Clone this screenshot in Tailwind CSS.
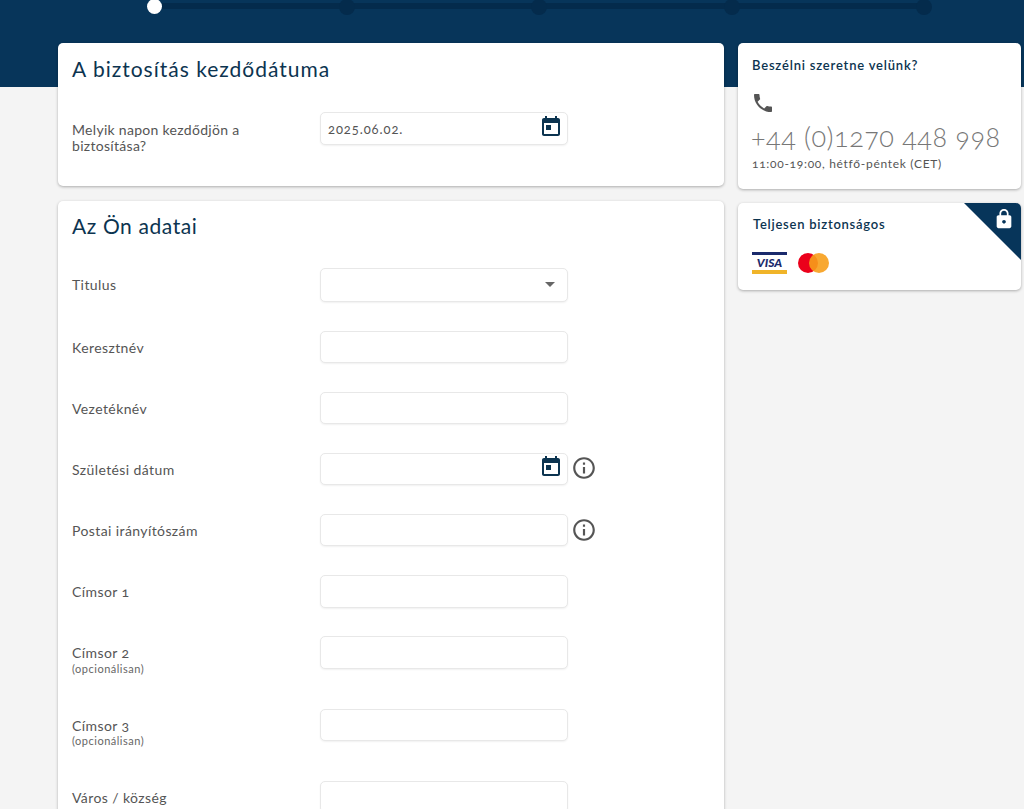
<!DOCTYPE html>
<html lang="hu">
<head>
  <meta charset="UTF-8">
  <meta name="viewport" content="width=device-width, initial-scale=1.0">
  <title>Biztosítás</title>
  <script src="https://cdn.jsdelivr.net/npm/@tailwindcss/browser@4"></script>
</head>
<body class="bg-[#f4f4f4] font-['Lato','Open_Sans',sans-serif] oldstyle-nums h-[809px] overflow-hidden">
  <!-- Header band with stepper -->
  <div class="bg-[#07355a] h-[87px] overflow-hidden">
    <div class="relative ml-[147px] w-[785px] h-[15px] flex items-start justify-between">
      <div class="absolute left-[8px] right-[8px] top-[3px] h-[6px] bg-[#042b4c]"></div>
      <div class="relative w-[15px] h-[15px] -mt-[1px] rounded-full bg-white"></div>
      <div class="relative w-[16px] h-[16px] -mt-[1px] rounded-full bg-[#042b4c]"></div>
      <div class="relative w-[16px] h-[16px] -mt-[1px] rounded-full bg-[#042b4c]"></div>
      <div class="relative w-[16px] h-[16px] -mt-[1px] rounded-full bg-[#042b4c]"></div>
      <div class="relative w-[16px] h-[16px] -mt-[1px] rounded-full bg-[#042b4c]"></div>
    </div>
  </div>

  <div class="flex items-start gap-[14px] pl-[58px] -mt-[44px]">
    <!-- Left column -->
    <div class="w-[666px] flex flex-col gap-[15px]">
      <div class="bg-white rounded-[5px] shadow-[0_1px_3px_rgba(0,0,0,0.3)] h-[143px] px-[14px]">
        <h2 class="pt-[12px] text-[21px] leading-[27px] text-[#0c3450] tracking-[1px]">A biztosítás kezdődátuma</h2>
        <div class="flex mt-[30px]">
          <div class="w-[248px] pt-[10px] pr-[60px] text-[14px] leading-[16px] text-[#555] tracking-[0.3px]">Melyik napon kezdődjön a biztosítása?</div>
          <div class="relative w-[248px] h-[33px] bg-white border border-[#e8e8e8] rounded-[5px] shadow-[0_1px_2px_rgba(0,0,0,0.06)] pl-[7px] text-[13px] leading-[32px] text-[#555] tracking-[0.9px]">
            2025.06.02.
            <svg class="absolute right-[4px] top-[2px] w-[24px] h-[24px] fill-[#0c3450]" viewBox="0 0 24 24"><path d="M19 3h-1V1h-2v2H8V1H6v2H5c-1.11 0-1.99.9-1.99 2L3 19c0 1.1.89 2 2 2h14c1.1 0 2-.9 2-2V5c0-1.1-.9-2-2-2zm0 16H5V8h14v11zM7 10h5v5H7z"/></svg>
          </div>
        </div>
      </div>

      <div class="bg-white rounded-[5px] shadow-[0_1px_3px_rgba(0,0,0,0.3)] h-[640px] px-[14px]">
        <h2 class="pt-[11px] text-[21px] leading-[27px] text-[#0c3450] tracking-[0.6px]">Az Ön adatai</h2>

        <div class="flex mt-[29px] h-[63px]">
          <div class="w-[248px] pt-[8px] text-[14px] leading-[17px] text-[#555] tracking-[0.4px]">Titulus</div>
          <div class="relative w-[248px] h-[34px] bg-white border border-[#e8e8e8] rounded-[5px] shadow-[0_1px_2px_rgba(0,0,0,0.06)]">
            <div class="absolute right-[12px] top-[13px] w-0 h-0 border-x-[5px] border-x-transparent border-t-[5px] border-t-[#666]"></div>
          </div>
        </div>

        <div class="flex h-[61px]">
          <div class="w-[248px] pt-[8px] text-[14px] leading-[17px] text-[#555] tracking-[0.4px]">Keresztnév</div>
          <div class="w-[248px] h-[32px] bg-white border border-[#e8e8e8] rounded-[5px] shadow-[0_1px_2px_rgba(0,0,0,0.06)]"></div>
        </div>

        <div class="flex h-[61px]">
          <div class="w-[248px] pt-[8px] text-[14px] leading-[17px] text-[#555] tracking-[0.4px]">Vezetéknév</div>
          <div class="w-[248px] h-[32px] bg-white border border-[#e8e8e8] rounded-[5px] shadow-[0_1px_2px_rgba(0,0,0,0.06)]"></div>
        </div>

        <div class="flex h-[61px]">
          <div class="w-[248px] pt-[8px] text-[14px] leading-[17px] text-[#555] tracking-[0.4px]">Születési dátum</div>
          <div class="relative w-[248px] h-[32px] bg-white border border-[#e8e8e8] rounded-[5px] shadow-[0_1px_2px_rgba(0,0,0,0.06)]">
            <svg class="absolute right-[4px] top-[1px] w-[24px] h-[24px] fill-[#0c3450]" viewBox="0 0 24 24"><path d="M19 3h-1V1h-2v2H8V1H6v2H5c-1.11 0-1.99.9-1.99 2L3 19c0 1.1.89 2 2 2h14c1.1 0 2-.9 2-2V5c0-1.1-.9-2-2-2zm0 16H5V8h14v11zM7 10h5v5H7z"/></svg>
          </div>
          <svg class="w-[26px] h-[26px] ml-[3px] mt-[2px] fill-[#555]" viewBox="0 0 24 24"><path d="M11 7h2v2h-2zm0 4h2v6h-2zm1-9C6.48 2 2 6.48 2 12s4.48 10 10 10 10-4.48 10-10S17.52 2 12 2zm0 18c-4.41 0-8-3.59-8-8s3.59-8 8-8 8 3.59 8 8-3.59 8-8 8z"/></svg>
        </div>

        <div class="flex h-[61px]">
          <div class="w-[248px] pt-[8px] text-[14px] leading-[17px] text-[#555] tracking-[0.4px]">Postai irányítószám</div>
          <div class="w-[248px] h-[32px] bg-white border border-[#e8e8e8] rounded-[5px] shadow-[0_1px_2px_rgba(0,0,0,0.06)]"></div>
          <svg class="w-[26px] h-[26px] ml-[3px] mt-[3px] fill-[#555]" viewBox="0 0 24 24"><path d="M11 7h2v2h-2zm0 4h2v6h-2zm1-9C6.48 2 2 6.48 2 12s4.48 10 10 10 10-4.48 10-10S17.52 2 12 2zm0 18c-4.41 0-8-3.59-8-8s3.59-8 8-8 8 3.59 8 8-3.59 8-8 8z"/></svg>
        </div>

        <div class="flex h-[61px]">
          <div class="w-[248px] pt-[8px] text-[14px] leading-[17px] text-[#555] tracking-[0.4px]">Címsor 1</div>
          <div class="w-[248px] h-[33px] bg-white border border-[#e8e8e8] rounded-[5px] shadow-[0_1px_2px_rgba(0,0,0,0.06)]"></div>
        </div>

        <div class="flex h-[73px]">
          <div class="w-[248px] pt-[8px] text-[14px] leading-[17px] text-[#555] tracking-[0.4px]">Címsor 2<div class="mt-[1px] text-[11px] leading-[13px] text-[#666] tracking-[0.5px]">(opcionálisan)</div></div>
          <div class="w-[248px] h-[33px] bg-white border border-[#e8e8e8] rounded-[5px] shadow-[0_1px_2px_rgba(0,0,0,0.06)]"></div>
        </div>

        <div class="flex h-[72px]">
          <div class="w-[248px] pt-[8px] text-[14px] leading-[17px] text-[#555] tracking-[0.4px]">Címsor 3<div class="text-[11px] leading-[13px] text-[#666] tracking-[0.5px]">(opcionálisan)</div></div>
          <div class="w-[248px] h-[32px] bg-white border border-[#e8e8e8] rounded-[5px] shadow-[0_1px_2px_rgba(0,0,0,0.06)]"></div>
        </div>

        <div class="flex h-[61px]">
          <div class="w-[248px] pt-[8px] text-[14px] leading-[17px] text-[#555] tracking-[0.4px]">Város / község</div>
          <div class="w-[248px] h-[32px] bg-white border border-[#e8e8e8] rounded-[5px] shadow-[0_1px_2px_rgba(0,0,0,0.06)]"></div>
        </div>
      </div>
    </div>

    <!-- Right column -->
    <div class="w-[283px] flex flex-col gap-[14px]">
      <div class="bg-white rounded-[5px] shadow-[0_1px_3px_rgba(0,0,0,0.3)] h-[146px] px-[14px] pt-[13px]">
        <div class="text-[13px] leading-[18px] font-semibold text-[#0c3450] tracking-[0.8px]">Beszélni szeretne velünk?</div>
        <svg class="w-[24px] h-[24px] mt-[17px] -ml-[1px] fill-[#555]" viewBox="0 0 24 24"><path d="M6.62 10.79c1.44 2.83 3.76 5.14 6.59 6.59l2.2-2.2c.27-.27.67-.36 1.02-.24 1.12.37 2.33.57 3.57.57.55 0 1 .45 1 1V20c0 .55-.45 1-1 1-9.39 0-17-7.61-17-17 0-.55.45-1 1-1h3.5c.55 0 1 .45 1 1 0 1.25.2 2.45.57 3.57.11.35.03.74-.25 1.02l-2.2 2.2z"/></svg>
        <div class="mt-[7px] -ml-[1px] text-[27px] leading-[30px] font-light text-[#777] tracking-[0.5px] whitespace-nowrap">+44 (0)1270 448 998</div>
        <div class="mt-[4px] text-[12px] leading-[16px] text-[#555] tracking-[0.7px] whitespace-nowrap">11:00-19:00, hétfő-péntek (CET)</div>
      </div>

      <div class="relative overflow-hidden bg-white rounded-[5px] shadow-[0_1px_3px_rgba(0,0,0,0.3)] h-[87px] pl-[15px] pt-[12px]">
        <svg class="absolute right-0 top-0 w-[57px] h-[57px] fill-[#07355a]" viewBox="0 0 57 57"><polygon points="0,0 57,0 57,57"/></svg>
        <svg class="absolute right-[6px] top-[5px] w-[22px] h-[22px] fill-white" viewBox="0 0 24 24"><path d="M18 8h-1V6c0-2.76-2.24-5-5-5S7 3.24 7 6v2H6c-1.1 0-2 .9-2 2v10c0 1.1.9 2 2 2h12c1.1 0 2-.9 2-2V10c0-1.1-.9-2-2-2zm-6 9c-1.1 0-2-.9-2-2s.9-2 2-2 2 .9 2 2-.9 2-2 2zm3.1-9H8.9V6c0-1.71 1.39-3.1 3.1-3.1 1.71 0 3.1 1.39 3.1 3.1v2z"/></svg>
        <div class="text-[13px] leading-[18px] font-semibold text-[#0c3450] tracking-[0.75px]">Teljesen biztonságos</div>
        <div class="flex items-center gap-[11px] -ml-[1px] mt-[19px]">
          <div class="w-[35px] h-[22px] flex flex-col justify-between">
            <div class="h-[3px] bg-[#1a2a6c]"></div>
            <div class="text-[12px] leading-[12px] font-black italic text-[#1a2a6c] text-center">VISA</div>
            <div class="h-[4px] bg-[#f0b429]"></div>
          </div>
          <div class="flex">
            <div class="w-[20px] h-[20px] rounded-full bg-[#eb001b]"></div>
            <div class="w-[20px] h-[20px] rounded-full bg-[#f79e1b]/90 -ml-[9px]"></div>
          </div>
        </div>
      </div>
    </div>
  </div>
</body>
</html>
